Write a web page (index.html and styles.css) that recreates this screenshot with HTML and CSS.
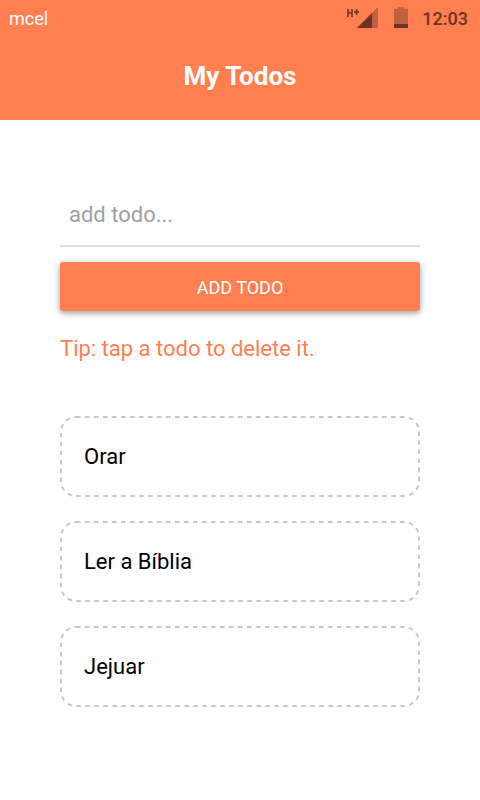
FILE: index.html
```html
<!DOCTYPE html>
<html lang="en">
<head>
<meta charset="utf-8">
<meta name="viewport" content="width=device-width, initial-scale=1">
<title>My Todos</title>
<link rel="stylesheet" href="styles.css">
</head>
<body>
<header class="top">
  <div class="status">
    <span class="carrier">mcel</span>
    <svg class="signal" width="32" height="22" viewBox="0 0 32 22" aria-hidden="true">
      <path d="M2 2v8M6 2v8M2 6h4M10.500 2v6M8 5h5" fill="none" stroke="#7a3c25" stroke-width="1.800"/>
      <path d="M32 0v21H11z" fill="#bf6040"/>
      <path d="M26 6v15H11z" fill="#6b3522"/>
    </svg>
    <svg class="battery" width="14" height="22" viewBox="0 0 14 22" aria-hidden="true">
      <path d="M4 0h6v2h4v19H0V2h4z" fill="#bf6040"/>
      <path d="M0 17h14v4H0z" fill="#6b3522"/>
    </svg>
    <time class="clock">12:03</time>
  </div>
  <h1 class="title">My Todos</h1>
</header>
<main class="content">
  <form class="form">
    <input class="field" type="text" placeholder="add todo..." aria-label="Add todo">
    <button class="add" type="button">ADD TODO</button>
  </form>
  <p class="tip">Tip: tap a todo to delete it.</p>
  <ul class="list">
    <li><button class="todo" type="button"><svg class="outline" aria-hidden="true"><rect class="dashes" x="1" y="1" rx="15"/></svg>Orar</button></li>
    <li><button class="todo" type="button"><svg class="outline" aria-hidden="true"><rect class="dashes" x="1" y="1" rx="15"/></svg>Ler a Bíblia</button></li>
    <li><button class="todo" type="button"><svg class="outline" aria-hidden="true"><rect class="dashes" x="1" y="1" rx="15"/></svg>Jejuar</button></li>
  </ul>
</main>
</body>
</html>
```
FILE: styles.css
```css
* { box-sizing: border-box; }
body {
  margin: 0;
  background: #fff;
  color: #000;
  font-family: Roboto, "Liberation Sans", sans-serif;
}
.top { background: coral; color: #fff; padding-bottom: 28px; }
.status {
  display: flex;
  align-items: center;
  height: 36px;
  padding: 0 12px 0 9px;
  font-size: 18px;
}
.carrier { margin-right: auto; }
.signal { margin-right: 16px; }
.battery { margin-right: 14px; }
.clock { color: #6b3522; font-weight: 500; }
.title {
  margin: 24px 0 0;
  font-size: 26px;
  line-height: 32px;
  font-weight: 700;
  text-align: center;
}
.content { padding: 60px; }
.form { display: flex; flex-direction: column; gap: 15px; }
.field {
  width: 100%;
  height: 67px;
  padding: 4px 9px 0;
  border: 0;
  border-bottom: 2px solid #ddd;
  font: inherit;
  font-size: 22px;
  outline: 0;
}
.field::placeholder { color: #a0a0a0; }
.add {
  height: 49px;
  padding: 2px 0 0;
  border: 0;
  border-radius: 3px;
  background: coral;
  color: #fff;
  font: inherit;
  font-size: 18px;
  box-shadow: 0 2px 6px rgba(0, 0, 0, 0.4);
}
.tip { margin: 24px 0 0; color: coral; font-size: 22px; line-height: 28px; }
.list {
  display: grid;
  gap: 24px;
  margin: 53px 0 0;
  padding: 0;
  list-style: none;
}
.todo {
  position: relative;
  display: block;
  width: 100%;
  height: 81px;
  padding: 0 24px;
  border: 0;
  border-radius: 15px;
  background: #fff;
  color: #000;
  font: inherit;
  font-size: 22px;
  text-align: left;
}
.outline {
  position: absolute;
  inset: 0;
  width: 100%;
  height: 100%;
}
.dashes {
  width: calc(100% - 2px);
  height: calc(100% - 2px);
  fill: none;
  stroke: #c8c8c8;
  stroke-width: 2;
  stroke-dasharray: 4.5;
}
```
